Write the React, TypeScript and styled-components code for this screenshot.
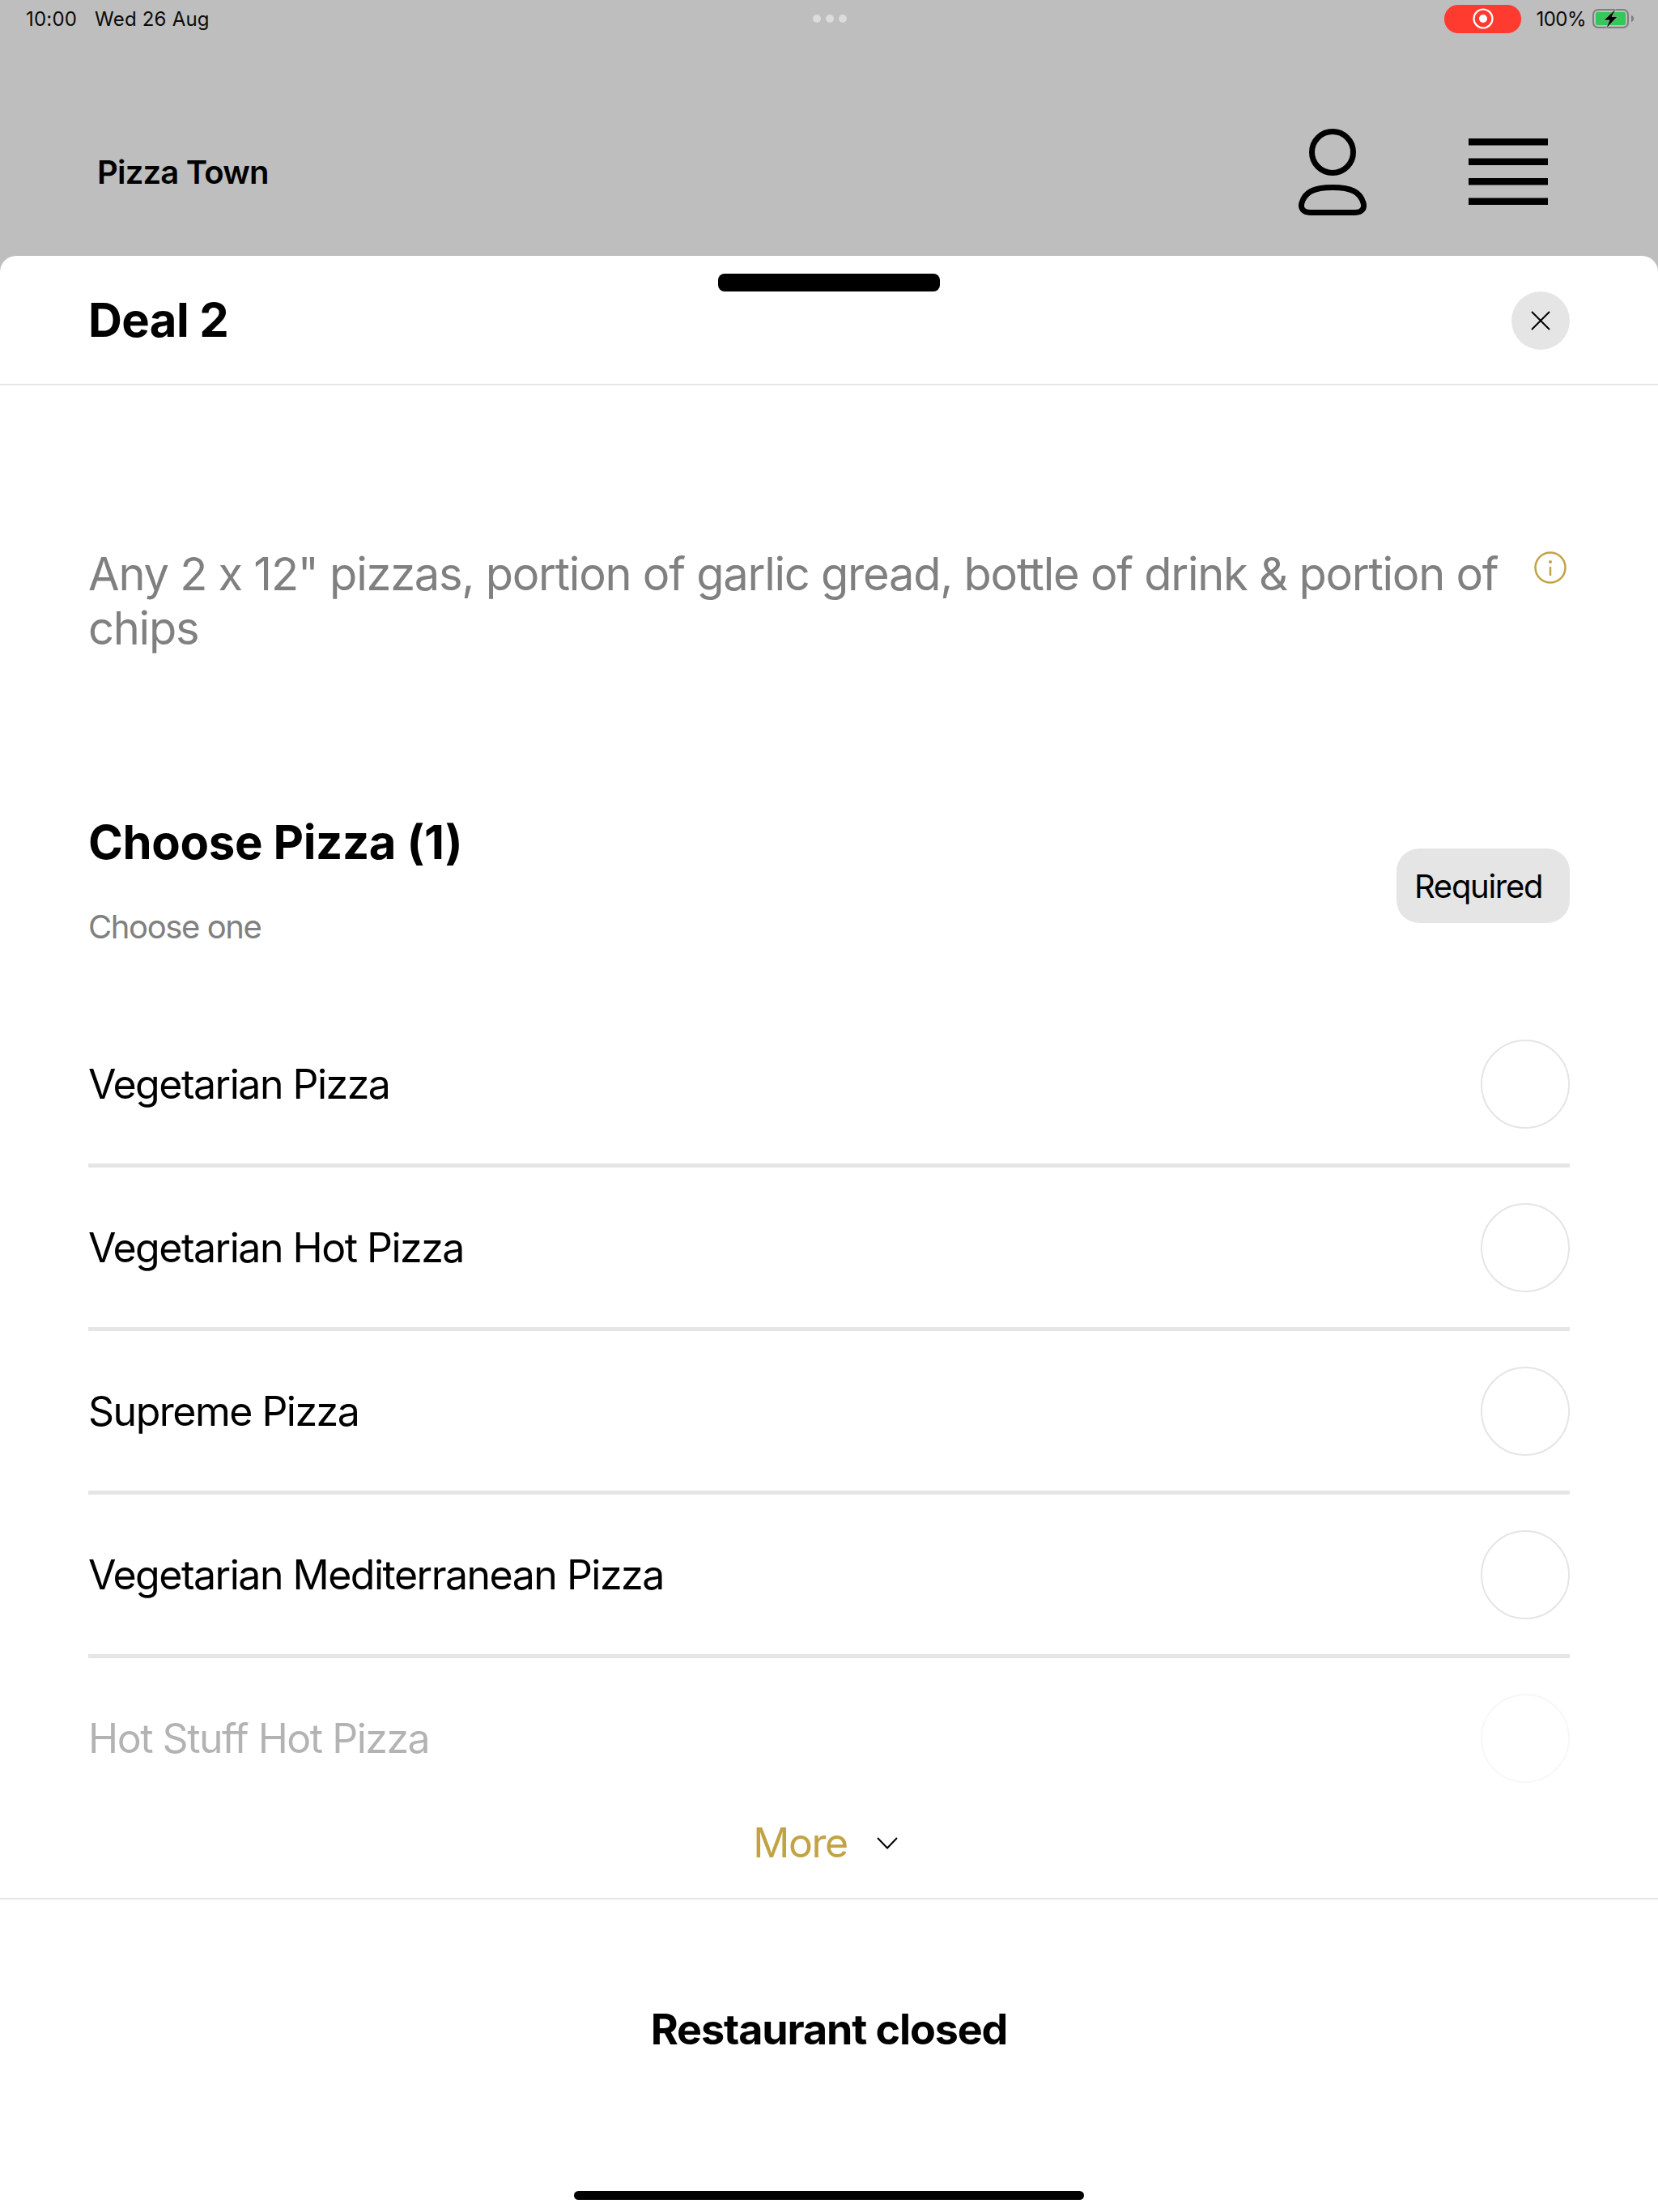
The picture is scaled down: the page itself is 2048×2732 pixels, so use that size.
import React from "react";
import styled, { createGlobalStyle } from "styled-components";

const Global = createGlobalStyle`
  html, body { margin: 0; padding: 0; background: #bebebe; }
  body { font-family: Inter, "Liberation Sans", sans-serif; color: #000; }
  * { box-sizing: border-box; }
`;

const Page = styled.div`
  width: 2048px;
  height: 2732px;
  display: flex;
  flex-direction: column;
  overflow: hidden;
  background: #bebebe;
`;

const StatusBar = styled.div`
  height: 46px;
  padding: 0 30px 0 32px;
  display: grid;
  grid-template-columns: 1fr auto 1fr;
  align-items: center;
  font-size: 24px;
  letter-spacing: 0.2px;
  color: #0a0a0a;
`;

const StatusLeft = styled.div`
  display: flex;
  gap: 22px;
`;

const Dots = styled.div`
  display: flex;
  gap: 6px;
`;

const Dot = styled.span`
  width: 10px;
  height: 10px;
  border-radius: 50%;
  background: #dcdcdc;
`;

const StatusRight = styled.div`
  display: flex;
  justify-content: flex-end;
  align-items: center;
`;

const RecordPill = styled.div`
  width: 95px;
  height: 35px;
  margin-right: 18px;
  border-radius: 17px;
  background: #ff3b30;
  display: flex;
  align-items: center;
  justify-content: center;
`;

const Percent = styled.span`
  margin-right: 8px;
  letter-spacing: -0.5px;
`;

const Header = styled.header`
  height: 270px;
  padding: 62px 136px 0 120px;
  display: flex;
  align-items: center;
  justify-content: space-between;
`;

const Brand = styled.div`
  font-size: 40px;
  font-weight: 600;
  letter-spacing: -0.8px;
`;

const HeaderIcons = styled.div`
  display: flex;
  align-items: center;
  gap: 126px;
`;

const Sheet = styled.section`
  position: relative;
  flex: 1;
  background: #fff;
  border-radius: 20px 20px 0 0;
  display: flex;
  flex-direction: column;
`;

const Handle = styled.div`
  position: absolute;
  top: 22px;
  left: 887px;
  width: 274px;
  height: 22px;
  border-radius: 8px;
  background: #000;
`;

const SheetHeader = styled.div`
  height: 160px;
  padding: 0 109px;
  border-bottom: 2px solid #e6e6e6;
  display: flex;
  align-items: center;
  justify-content: space-between;
`;

const Title = styled.h1`
  margin: 0;
  font-size: 58px;
  font-weight: 700;
  letter-spacing: -0.6px;
`;

const CloseButton = styled.button`
  width: 72px;
  height: 72px;
  margin-top: 2px;
  padding: 0;
  border: 0;
  border-radius: 50%;
  background: #e5e5e5;
  display: flex;
  align-items: center;
  justify-content: center;
`;

const Description = styled.div`
  padding: 200px 109px 0;
  display: flex;
  justify-content: space-between;
  align-items: flex-start;
  gap: 30px;
`;

const DescriptionText = styled.p`
  margin: 0;
  font-size: 56px;
  line-height: 67px;
  letter-spacing: -1.25px;
  font-feature-settings: "calt" 0;
  color: #808080;
`;

const InfoWrap = styled.div`
  flex: none;
  margin: 5px 4px 0 0;
`;

const Section = styled.div`
  margin-top: 196px;
  padding: 0 109px;
  display: flex;
  justify-content: space-between;
  align-items: center;
`;

const SectionTitle = styled.h2`
  margin: 0;
  font-size: 58px;
  line-height: 68px;
  font-weight: 700;
  letter-spacing: -0.35px;
`;

const SectionHint = styled.div`
  margin-top: 47px;
  font-size: 40px;
  line-height: 48px;
  letter-spacing: -1.4px;
  color: #808080;
`;

const Badge = styled.div`
  width: 214px;
  height: 92px;
  margin-top: 13px;
  padding-left: 22px;
  border-radius: 28px;
  background: #e5e5e5;
  display: flex;
  align-items: center;
  font-size: 40px;
  letter-spacing: -1.3px;
`;

const OptionsBox = styled.div`
  position: relative;
  height: 1175px;
  overflow: hidden;
`;

const Options = styled.div`
  margin-top: 71px;
  padding: 0 109px;
`;

const Row = styled.div`
  height: 202px;
  display: flex;
  align-items: center;
  justify-content: space-between;
  border-bottom: 5px solid #e5e5e5;
  font-size: 50px;
  letter-spacing: -1.5px;
`;

const Radio = styled.span`
  width: 110px;
  height: 110px;
  border-radius: 50%;
  border: 2px solid #e5e5e5;
`;

const Fade = styled.div`
  position: absolute;
  left: 0;
  right: 0;
  bottom: 0;
  height: 283px;
  background: linear-gradient(
    to bottom,
    rgba(255, 255, 255, 0.7) 0,
    rgba(255, 255, 255, 0.7) 51%,
    #fff 52%
  );
`;

const More = styled.div`
  position: absolute;
  left: 0;
  right: 0;
  bottom: 0;
  height: 136px;
  padding-right: 9px;
  display: flex;
  justify-content: center;
  align-items: center;
  gap: 36px;
  font-size: 50px;
  letter-spacing: -1.5px;
  color: #c2a344;
`;

const Footer = styled.div`
  height: 2px;
  background: #e5e5e5;
`;

const Closed = styled.div`
  height: 320px;
  display: flex;
  align-items: center;
  justify-content: center;
  font-size: 52px;
  font-weight: 700;
  letter-spacing: -1.1px;
`;

const HomeBar = styled.div`
  position: absolute;
  bottom: 15px;
  left: 709px;
  width: 630px;
  height: 11px;
  border-radius: 5.5px;
  background: #000;
`;

const options = [
  "Vegetarian Pizza",
  "Vegetarian Hot Pizza",
  "Supreme Pizza",
  "Vegetarian Mediterranean Pizza",
  "Hot Stuff Hot Pizza",
];

export default function App() {
  return (
    <Page>
      <Global />
      <StatusBar>
        <StatusLeft>
          <span>10:00</span>
          <span>Wed 26 Aug</span>
        </StatusLeft>
        <Dots>
          <Dot />
          <Dot />
          <Dot />
        </Dots>
        <StatusRight>
          <RecordPill>
            <svg width="26" height="26" viewBox="0 0 26 26">
              <circle cx="13" cy="13" r="11.500" fill="none" stroke="#fff" strokeWidth="2.200" />
              <circle cx="13" cy="13" r="5" fill="#fff" />
            </svg>
          </RecordPill>
          <Percent>100%</Percent>
          <svg width="51" height="24" viewBox="0 0 51 24">
            <rect x="1" y="1" width="43" height="22" rx="6" fill="none" stroke="#7f7f7f" strokeWidth="2" />
            <rect x="4" y="4" width="37" height="16" rx="2.500" fill="#34c759" />
            <path d="M48 8c2 .5 3 2 3 4s-1 3.500-3 4z" fill="#7f7f7f" />
            <path d="M29 0 14 14h7L17 24l14-14.500h-7z" fill="#000" stroke="#bebebe" strokeWidth="0.600" />
          </svg>
        </StatusRight>
      </StatusBar>
      <Header>
        <Brand>Pizza Town</Brand>
        <HeaderIcons>
          <svg width="84" height="107" viewBox="0 0 84 107">
            <circle cx="42" cy="29" r="25.500" fill="none" stroke="#000" strokeWidth="7" />
            <path
              d="M14 103.500h56c8 0 12-5 10-12-4-13-14-19-38-19s-34 6-38 19c-2 7 2 12 10 12z"
              fill="none"
              stroke="#000"
              strokeWidth="7"
            />
          </svg>
          <svg width="98" height="82" viewBox="0 0 98 82">
            <path d="M0 4.250h98M0 28.750h98M0 53.250h98M0 77.750h98" stroke="#000" strokeWidth="8.500" />
          </svg>
        </HeaderIcons>
      </Header>
      <Sheet>
        <Handle />
        <SheetHeader>
          <Title>Deal 2</Title>
          <CloseButton aria-label="Close">
            <svg width="24" height="24" viewBox="0 0 24 24">
              <path d="M1 1l22 22M23 1 1 23" stroke="#000" strokeWidth="2" />
            </svg>
          </CloseButton>
        </SheetHeader>
        <Description>
          <DescriptionText>
            Any 2 x 12" pizzas, portion of garlic gread, bottle of drink &amp; portion of chips
          </DescriptionText>
          <InfoWrap>
            <svg width="40" height="40" viewBox="0 0 40 40">
              <circle cx="20" cy="20" r="18.500" fill="none" stroke="#c2a344" strokeWidth="2.500" />
              <circle cx="20" cy="13" r="2" fill="#c2a344" />
              <path d="M20 19v11" stroke="#c2a344" strokeWidth="2.500" />
            </svg>
          </InfoWrap>
        </Description>
        <Section>
          <div>
            <SectionTitle>Choose Pizza (1)</SectionTitle>
            <SectionHint>Choose one</SectionHint>
          </div>
          <Badge>Required</Badge>
        </Section>
        <OptionsBox>
          <Options>
            {options.map((o) => (
              <Row key={o}>
                <span>{o}</span>
                <Radio />
              </Row>
            ))}
          </Options>
          <Fade />
          <More>
            <span>More</span>
            <svg width="26" height="15" viewBox="0 0 26 15">
              <path d="M1 1 13 13.500 25 1" fill="none" stroke="#000" strokeWidth="2" />
            </svg>
          </More>
        </OptionsBox>
        <Footer />
        <Closed>Restaurant closed</Closed>
        <HomeBar />
      </Sheet>
    </Page>
  );
}
